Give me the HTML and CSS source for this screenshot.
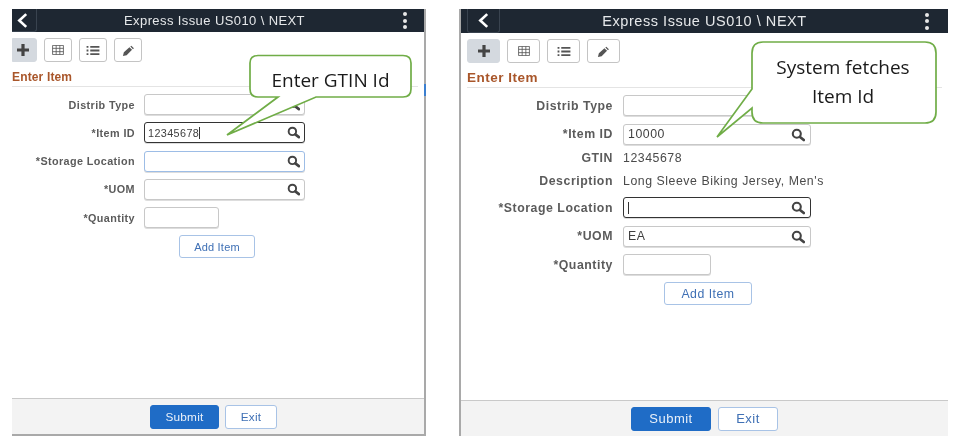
FILE: index.html
```html
<!DOCTYPE html>
<html lang="en">
<head>
<meta charset="utf-8">
<title>Express Issue</title>
<link rel="stylesheet" href="styles.css">
</head>
<body>
<svg class="defs" width="0" height="0" aria-hidden="true">
  <defs>
    <symbol id="i-search" viewBox="0 0 14 14"><circle cx="5.8" cy="5.8" r="4" fill="none" stroke="currentColor" stroke-width="2.100"/><path d="M9 9 12.800 12" stroke="currentColor" stroke-width="2.800" stroke-linecap="round"/></symbol>
    <symbol id="i-back" viewBox="0 0 12 16"><path d="M9.500 2 3 8l6.500 6" fill="none" stroke="currentColor" stroke-width="2.500"/></symbol>
    <symbol id="i-plus" viewBox="0 0 14 14"><path d="M7 1v12M1 7h12" stroke="currentColor" stroke-width="3.200"/></symbol>
    <symbol id="i-grid" viewBox="0 0 14 12"><path d="M.5.500h13v11H.5zM.5 4h13M.5 8h13M4.800.5v11M9.200.5v11" fill="none" stroke="currentColor" stroke-width="1"/></symbol>
    <symbol id="i-list" viewBox="0 0 14 12"><path d="M4 2h10M4 6h10M4 10h10M0 2h2M0 6h2M0 10h2" stroke="currentColor" stroke-width="2"/></symbol>
    <symbol id="i-pencil" viewBox="0 0 14 14"><path d="M1 13l1-4 6-5.500 2.800 2.800L5 12zM9 2.800l1-1 2.800 2.800-1 1z" fill="currentColor"/></symbol>
  </defs>
</svg>
<main class="desk">
  <section class="phone phone-a">
    <header class="bar">
      <span class="back"><svg class="back-icon"><use href="#i-back"/></svg></span>
      <h1 class="title">Express Issue US010 \ NEXT</h1>
      <span class="dots"><i></i><i></i><i></i></span>
    </header>
    <nav class="tools">
      <span class="tool tool-on"><svg class="ic-plus"><use href="#i-plus"/></svg></span>
      <span class="tool"><svg class="ic-grid"><use href="#i-grid"/></svg></span>
      <span class="tool"><svg class="ic-list"><use href="#i-list"/></svg></span>
      <span class="tool"><svg class="ic-pencil"><use href="#i-pencil"/></svg></span>
    </nav>
    <h2 class="heading">Enter Item</h2>
    <form class="form">
      <label class="lbl">Distrib Type</label><div class="field"><svg class="lens"><use href="#i-search"/></svg></div>
      <label class="lbl">*Item ID</label><div class="field field-focus">12345678<span class="caret"></span><svg class="lens"><use href="#i-search"/></svg></div>
      <label class="lbl">*Storage Location</label><div class="field field-blue"><svg class="lens"><use href="#i-search"/></svg></div>
      <label class="lbl">*UOM</label><div class="field"><svg class="lens"><use href="#i-search"/></svg></div>
      <label class="lbl">*Quantity</label><div class="field field-qty"></div>
    </form>
    <div class="add-wrap"><span class="btn btn-add">Add Item</span></div>
    <footer class="foot"><span class="btn btn-submit">Submit</span><span class="btn btn-exit">Exit</span></footer>
    <svg class="balloon" viewBox="0 0 190 90" aria-hidden="true"><path d="M33 9Q33 1.500 41 1.500H186Q194 1.500 194 9V35Q194 43 186 43H99L10 81 61 43H41Q33 43 33 35Z" fill="#fff" stroke="#70ad47" stroke-width="1.700"/></svg>
    <p class="balloon-text">Enter GTIN Id</p>
  </section>
  <span class="edge-mark"></span>

  <section class="phone phone-b">
    <header class="bar">
      <span class="back"><svg class="back-icon"><use href="#i-back"/></svg></span>
      <h1 class="title">Express Issue US010 \ NEXT</h1>
      <span class="dots"><i></i><i></i><i></i></span>
    </header>
    <nav class="tools">
      <span class="tool tool-on"><svg class="ic-plus"><use href="#i-plus"/></svg></span>
      <span class="tool"><svg class="ic-grid"><use href="#i-grid"/></svg></span>
      <span class="tool"><svg class="ic-list"><use href="#i-list"/></svg></span>
      <span class="tool"><svg class="ic-pencil"><use href="#i-pencil"/></svg></span>
    </nav>
    <h2 class="heading">Enter Item</h2>
    <form class="form">
      <label class="lbl">Distrib Type</label><div class="field"></div>
      <label class="lbl">*Item ID</label><div class="field">10000<svg class="lens"><use href="#i-search"/></svg></div>
      <label class="lbl row-short">GTIN</label><div class="value row-short">12345678</div>
      <label class="lbl row-tall">Description</label><div class="value row-tall">Long Sleeve Biking Jersey, Men's</div>
      <label class="lbl">*Storage Location</label><div class="field field-focus"><span class="caret"></span><svg class="lens"><use href="#i-search"/></svg></div>
      <label class="lbl">*UOM</label><div class="field">EA<svg class="lens"><use href="#i-search"/></svg></div>
      <label class="lbl">*Quantity</label><div class="field field-qty"></div>
    </form>
    <div class="add-wrap"><span class="btn btn-add">Add Item</span></div>
    <footer class="foot"><span class="btn btn-submit">Submit</span><span class="btn btn-exit">Exit</span></footer>
    <svg class="balloon" viewBox="0 0 240 110" aria-hidden="true"><path d="M36 12Q36 1 47 1H209Q220 1 220 12V71Q220 82 209 82H47Q36 82 36 71V67L1 96 36 48Z" fill="#fff" stroke="#70ad47" stroke-width="1.700"/></svg>
    <p class="balloon-text">System fetches<br>Item Id</p>
  </section>
</main>
</body>
</html>
```
FILE: styles.css
```css
* { box-sizing: border-box; }
html, body { margin: 0; height: 442px; background: #fff; overflow: hidden; }
body { font-family: "Liberation Sans", Arial, sans-serif; color: #4d4d4d; }
.defs { position: absolute; }
.desk { position: relative; display: flex; align-items: flex-start; padding: 9px 0 0 12px; height: 442px; }
.edge-mark { position: absolute; left: 424px; top: 84px; width: 2px; height: 12px; background: #3b7fd0; }

.phone { position: relative; display: flex; flex-direction: column; background: #fff; filter: blur(.35px); }
.phone-a { width: 414px; height: 427px; margin-right: 33px; border-right: 2px solid #a9a9a9; border-bottom: 2px solid #a9a9a9; --bar: 23px; --lab: 123px; --gap: 9px; --inp: 161px; --qty: 75px; --rgap: 7.300px; --h: 21px; --fs: 10.800px; --ls: .4px; }
.phone-b { width: 489px; height: 427px; border-left: 2px solid #a9a9a9; --bar: 24px; --lab: 152px; --gap: 10px; --inp: 188px; --qty: 88px; --rgap: 7.500px; --h: 21px; --fs: 12.300px; --ls: .55px; }

.bar { flex: none; height: var(--bar); display: flex; align-items: center; background: #1e2732; color: #fff; position: relative; }
.title { margin: 0; flex: 1; text-align: center; font-weight: 400; color: #e6e8ea; white-space: nowrap; }
.back { flex: none; display: flex; align-items: center; justify-content: center; border: 1px solid #39434f; border-top: 0; border-left: 0; border-radius: 0 0 3px 0; height: var(--bar); color: #fff; }
.back-icon { width: 13px; height: 17px; }
.dots { flex: none; display: flex; flex-direction: column; gap: 2.500px; }
.dots i { display: block; width: 4px; height: 4px; border-radius: 50%; background: #e8e8e8; }
.phone-a .back { width: 25px; padding-right: 4px; }
.phone-a .title { padding-right: 11px; font-size: 13px; letter-spacing: .4px; }
.phone-a .dots { margin-right: 17px; }
.phone-b .back { width: 33px; margin-left: 6px; border-left: 1px solid #39434f; border-radius: 0 0 3px 3px; }
.phone-b .title { padding-right: 16px; font-size: 14.500px; letter-spacing: .55px; }
.phone-b .dots { margin-right: 19px; }

.tools { flex: none; display: flex; margin-top: 6px; }
.tool { display: flex; align-items: center; justify-content: center; height: 24px; border: 1px solid #c4c4c4; border-radius: 3px; background: #fff; color: #555; }
.tool-on { background: #d4d9df; border-color: #d4d9df; color: #444; }
.phone-a .tools { gap: 7px; }
.phone-a .tool { width: 28px; }
.phone-a .tool-on { width: 25px; padding-right: 4px; border-radius: 0 3px 3px 0; }
.phone-b .tools { gap: 7px; margin-left: 6px; }
.phone-b .tool { width: 33px; }
.ic-plus { width: 14px; height: 14px; }
.ic-grid { width: 14px; height: 10px; }
.ic-list { width: 14px; height: 11px; }
.ic-pencil { width: 13px; height: 13px; }

.heading { margin: 0; font-weight: 700; color: #a9562a; border-bottom: 1px solid #e4e4e4; padding-bottom: 3px; height: 16px; line-height: 12px; white-space: nowrap; }
.phone-a .heading { margin: 9px 6px 0 0; font-size: 12px; letter-spacing: .15px; }
.phone-b .heading { margin: 9px 6px 0 6px; font-size: 13.500px; letter-spacing: .5px; }

.form { flex: none; display: grid; grid-template-columns: var(--lab) auto; column-gap: var(--gap); row-gap: var(--rgap); justify-content: start; align-items: center; margin-top: 7px; }
.lbl { text-align: right; font-size: var(--fs); font-weight: 700; color: #5b5b5b; letter-spacing: var(--ls); white-space: nowrap; }
.field { position: relative; display: flex; align-items: center; width: var(--inp); height: var(--h); padding-left: 3px; border: 1px solid #c8c8c8; border-radius: 3px; background: #fff; font-size: var(--fs); letter-spacing: var(--ls); color: #3f3f3f; box-shadow: 0 1px 0 #ddd; }
.field-focus { border-color: #333; border-width: 1.300px; }
.field-blue { border-color: #9dbde6; }
.field-qty { width: var(--qty); }
.lens { position: absolute; right: 4px; top: 3px; width: 13px; height: 13px; color: #444; }
.caret { display: inline-block; width: 1px; height: 12px; background: #333; }
.value { font-size: var(--fs); color: #4a4a4a; letter-spacing: var(--ls); white-space: nowrap; }
.row-short { height: 13px; line-height: 13px; }
.row-tall { height: 17px; line-height: 17px; }
.phone-b .field { padding-left: 4px; }
.phone-b .lens { right: 5px; width: 14px; height: 14px; }

.add-wrap { flex: none; display: flex; }
.phone-a .add-wrap { margin: 7px 0 0 167px; }
.phone-b .add-wrap { margin: 7px 0 0 203px; }

.btn { display: flex; align-items: center; justify-content: center; height: 24px; border-radius: 3px; border: 1px solid #a8c3e6; background: #fff; color: #3f70b5; }
.phone-a .btn { font-size: 11.800px; letter-spacing: .2px; }
.phone-b .btn { font-size: 13px; letter-spacing: .5px; }
.phone-a .btn-add { width: 76px; height: 23px; font-size: 11px; }
.phone-b .btn-add { width: 88px; height: 23px; font-size: 12.300px; }
.phone-a .btn-submit, .phone-b .btn-submit { background: #1f6cc6; border-color: #1f6cc6; color: #e9f0f9; }

.foot { margin-top: auto; display: flex; align-items: center; gap: 6px; height: 36px; border-top: 1px solid #c9c9c9; background: #f3f3f3; }
.phone-a .foot { padding-left: 138px; }
.phone-a .btn-submit { width: 69px; }
.phone-a .btn-exit { width: 52px; }
.phone-b .foot { padding-left: 170px; gap: 7px; }
.phone-b .btn-submit { width: 80px; }
.phone-b .btn-exit { width: 60px; }

.balloon { position: absolute; overflow: visible; }
.phone-a .balloon { left: 205px; top: 45px; width: 190px; height: 90px; }
.phone-b .balloon { left: 255px; top: 32px; width: 240px; height: 110px; }
.balloon-text { position: absolute; margin: 0; font-family: "Open Sans", sans-serif; color: #1a1a1a; text-align: center; white-space: nowrap; }
.phone-a .balloon-text { left: 238px; top: 50px; width: 161px; height: 42px; font-size: 19px; line-height: 42px; }
.phone-b .balloon-text { left: 290px; top: 44px; width: 184px; font-size: 19px; line-height: 29px; }
```
